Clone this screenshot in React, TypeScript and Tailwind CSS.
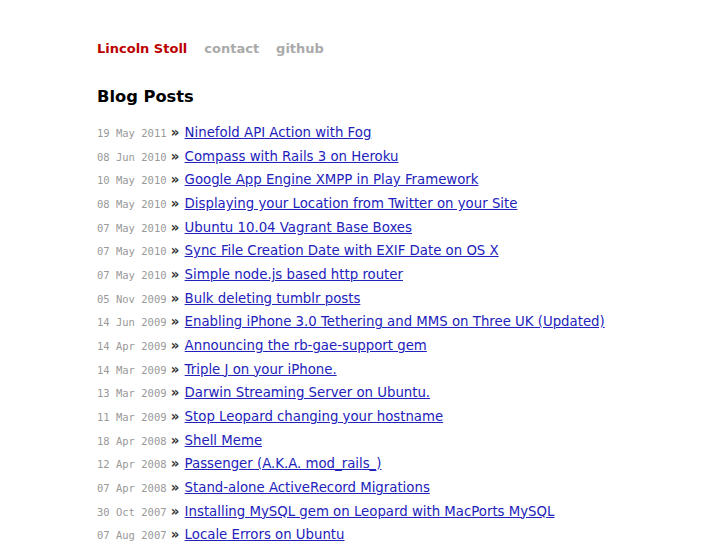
const posts: [string, string][] = [
  ["19 May 2011", "Ninefold API Action with Fog"],
  ["08 Jun 2010", "Compass with Rails 3 on Heroku"],
  ["10 May 2010", "Google App Engine XMPP in Play Framework"],
  ["08 May 2010", "Displaying your Location from Twitter on your Site"],
  ["07 May 2010", "Ubuntu 10.04 Vagrant Base Boxes"],
  ["07 May 2010", "Sync File Creation Date with EXIF Date on OS X"],
  ["07 May 2010", "Simple node.js based http router"],
  ["05 Nov 2009", "Bulk deleting tumblr posts"],
  ["14 Jun 2009", "Enabling iPhone 3.0 Tethering and MMS on Three UK (Updated)"],
  ["14 Apr 2009", "Announcing the rb-gae-support gem"],
  ["14 Mar 2009", "Triple J on your iPhone."],
  ["13 Mar 2009", "Darwin Streaming Server on Ubuntu."],
  ["11 Mar 2009", "Stop Leopard changing your hostname"],
  ["18 Apr 2008", "Shell Meme"],
  ["12 Apr 2008", "Passenger (A.K.A. mod_rails_)"],
  ["07 Apr 2008", "Stand-alone ActiveRecord Migrations"],
  ["30 Oct 2007", "Installing MySQL gem on Leopard with MacPorts MySQL"],
  ["07 Aug 2007", "Locale Errors on Ubuntu"],
];

export default function App() {
  return (
    <div className="min-h-screen bg-white font-['DejaVu_Sans',sans-serif] text-[#333]">
      <div className="pl-[97px] pt-[39px]">
        <nav className="flex gap-[17px] text-[13px] font-bold leading-[20px]">
          <a className="text-[#b00]">Lincoln Stoll</a>
          <a className="text-[#aaa]">contact</a>
          <a className="text-[#aaa]">github</a>
        </nav>
        <h1 className="mt-[26px] text-[16.3px] font-bold leading-[24px] text-black">Blog Posts</h1>
        <ul className="mt-[12px]">
          {posts.map(([date, title], i) => (
            <li key={i} className="text-[13.3px] leading-[23.65px] whitespace-nowrap">
              <span className="font-['DejaVu_Sans_Mono',monospace] text-[10.5px] leading-none text-[#999]">{date}</span>{" "}
              <span className="font-bold text-[#333]">»</span>{" "}
              <a href="#" className="ml-[1px] text-[#22b] underline">{title}</a>
            </li>
          ))}
        </ul>
      </div>
    </div>
  );
}
